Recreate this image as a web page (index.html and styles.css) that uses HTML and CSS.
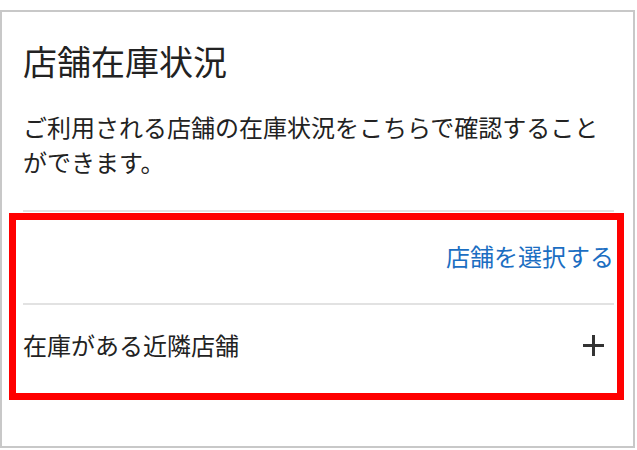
FILE: index.html
```html
<!DOCTYPE html>
<html lang="ja">
<head>
  <meta charset="UTF-8" />
  <title>店舗在庫状況</title>
  <meta name="viewport" content="width=device-width, initial-scale=1" />
  <link rel="stylesheet" href="styles.css">
</head>
<body>
  <div class="card">
    <h1>店舗在庫状況</h1>
    <p class="lead">ご利用される店舗の在庫状況をこちらで確認することができます。</p>

    <div class="row row-select">
      <a href="#" class="select-link">店舗を選択する</a>
    </div>
    <div class="row row-nearby">
      <span>在庫がある近隣店舗</span>
      <svg class="plus" width="21" height="21" viewBox="0 0 21 21">
        <path d="M10.5 0 V21 M0 10.5 H21" stroke="#333" stroke-width="3" fill="none" />
      </svg>
    </div>
  </div>

  <div class="highlight"></div>
</body>
</html>
```

FILE: styles.css
```css
body { margin: 0; background: #fff; font-family: "Noto Sans CJK JP", "Noto Sans", sans-serif; color: #222; position: relative; }
.card { margin-top: 10px; width: 635px; height: 438px; box-sizing: border-box; border: 2px solid #c8c8c8; padding: 29px 19px 0 21px; }
h1 { margin: 0; font-size: 34px; font-weight: normal; line-height: 40px; }
.lead { margin: 28px 0 0; font-size: 24px; line-height: 35px; padding-bottom: 31px; border-bottom: 2px solid #e2e2e2; }
.row { display: flex; align-items: center; font-size: 24px; line-height: 36px; }
.row-select { justify-content: flex-end; padding: 26px 0 29px; border-bottom: 2px solid #e2e2e2; }
.row-nearby { justify-content: space-between; padding: 22px 10px 0 0; }
.select-link { color: #1b6ec2; text-decoration: none; }
.plus { display: block; }
.highlight { position: absolute; left: 9px; top: 213px; width: 615px; height: 187px; box-sizing: border-box; border: 7px solid #ff0000; }
```
